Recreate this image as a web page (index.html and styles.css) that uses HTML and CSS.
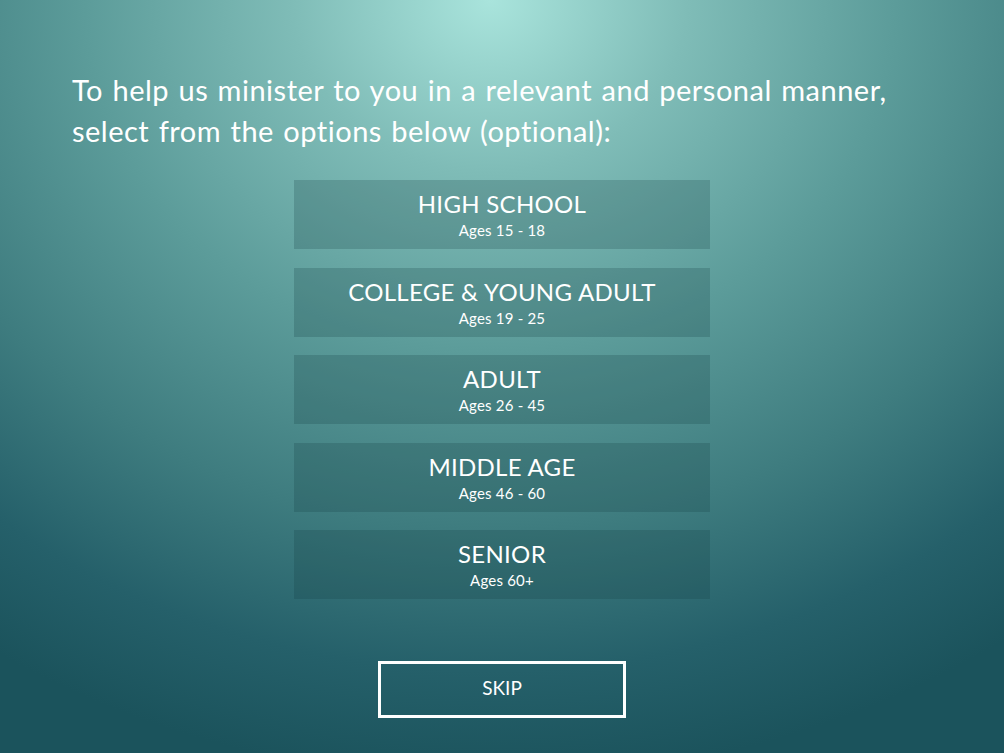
FILE: index.html
```html
<!DOCTYPE html>
<html lang="en">
<head>
<meta charset="utf-8">
<title>Select your group</title>
<link rel="stylesheet" href="styles.css">
</head>
<body>
<main class="screen">
  <h1 class="prompt">To help us minister to you in a relevant and personal manner,<br>select from the options below (optional):</h1>
  <div class="options">
    <button class="option"><span class="option-title">HIGH SCHOOL</span><span class="option-sub">Ages 15 - 18</span></button>
    <button class="option"><span class="option-title">COLLEGE &amp; YOUNG ADULT</span><span class="option-sub">Ages 19 - 25</span></button>
    <button class="option"><span class="option-title">ADULT</span><span class="option-sub">Ages 26 - 45</span></button>
    <button class="option"><span class="option-title">MIDDLE AGE</span><span class="option-sub">Ages 46 - 60</span></button>
    <button class="option"><span class="option-title">SENIOR</span><span class="option-sub">Ages 60+</span></button>
  </div>
  <button class="skip">SKIP</button>
</main>
</body>
</html>
```
FILE: styles.css
```css
html, body {
  margin: 0;
  padding: 0;
  height: 100%;
}
body {
  width: 1004px;
  height: 753px;
  overflow: hidden;
  font-family: Lato, "Noto Sans", "Liberation Sans", sans-serif;
  color: #fff;
  background: radial-gradient(ellipse 900px 780px at 490px 0px, #a9e4dc 0%, #7fbcb7 22%, #5c9c9a 45%, #3e7c7f 68%, #25606a 86%, #1b535c 100%);
}
.screen {
  display: flex;
  flex-direction: column;
  align-items: center;
  height: 100%;
}
.prompt {
  align-self: stretch;
  margin: 0;
  padding: 69px 0 0 72px;
  font-size: 29px;
  line-height: 41px;
  font-weight: 400;
  letter-spacing: 0.5px;
  word-spacing: 1.5px;
}
.options {
  display: flex;
  flex-direction: column;
  gap: 18.5px;
  margin-top: 29px;
}
.option {
  width: 416px;
  height: 69px;
  border: 0;
  padding: 0;
  background: rgba(20, 60, 62, 0.22);
  color: #fff;
  font-family: inherit;
  display: flex;
  flex-direction: column;
  align-items: center;
  justify-content: center;
  cursor: pointer;
}
.option-title {
  font-size: 24px;
  line-height: 28px;
  letter-spacing: 0.3px;
}
.option-sub {
  font-size: 15px;
  line-height: 18px;
  margin-top: 3px;
  letter-spacing: 0.2px;
}
.skip {
  margin-top: 62px;
  width: 248px;
  height: 57px;
  border: 3px solid #fff;
  padding: 0 0 5px;
  background: transparent;
  color: #fff;
  font-family: inherit;
  font-size: 19px;
  cursor: pointer;
}
```
